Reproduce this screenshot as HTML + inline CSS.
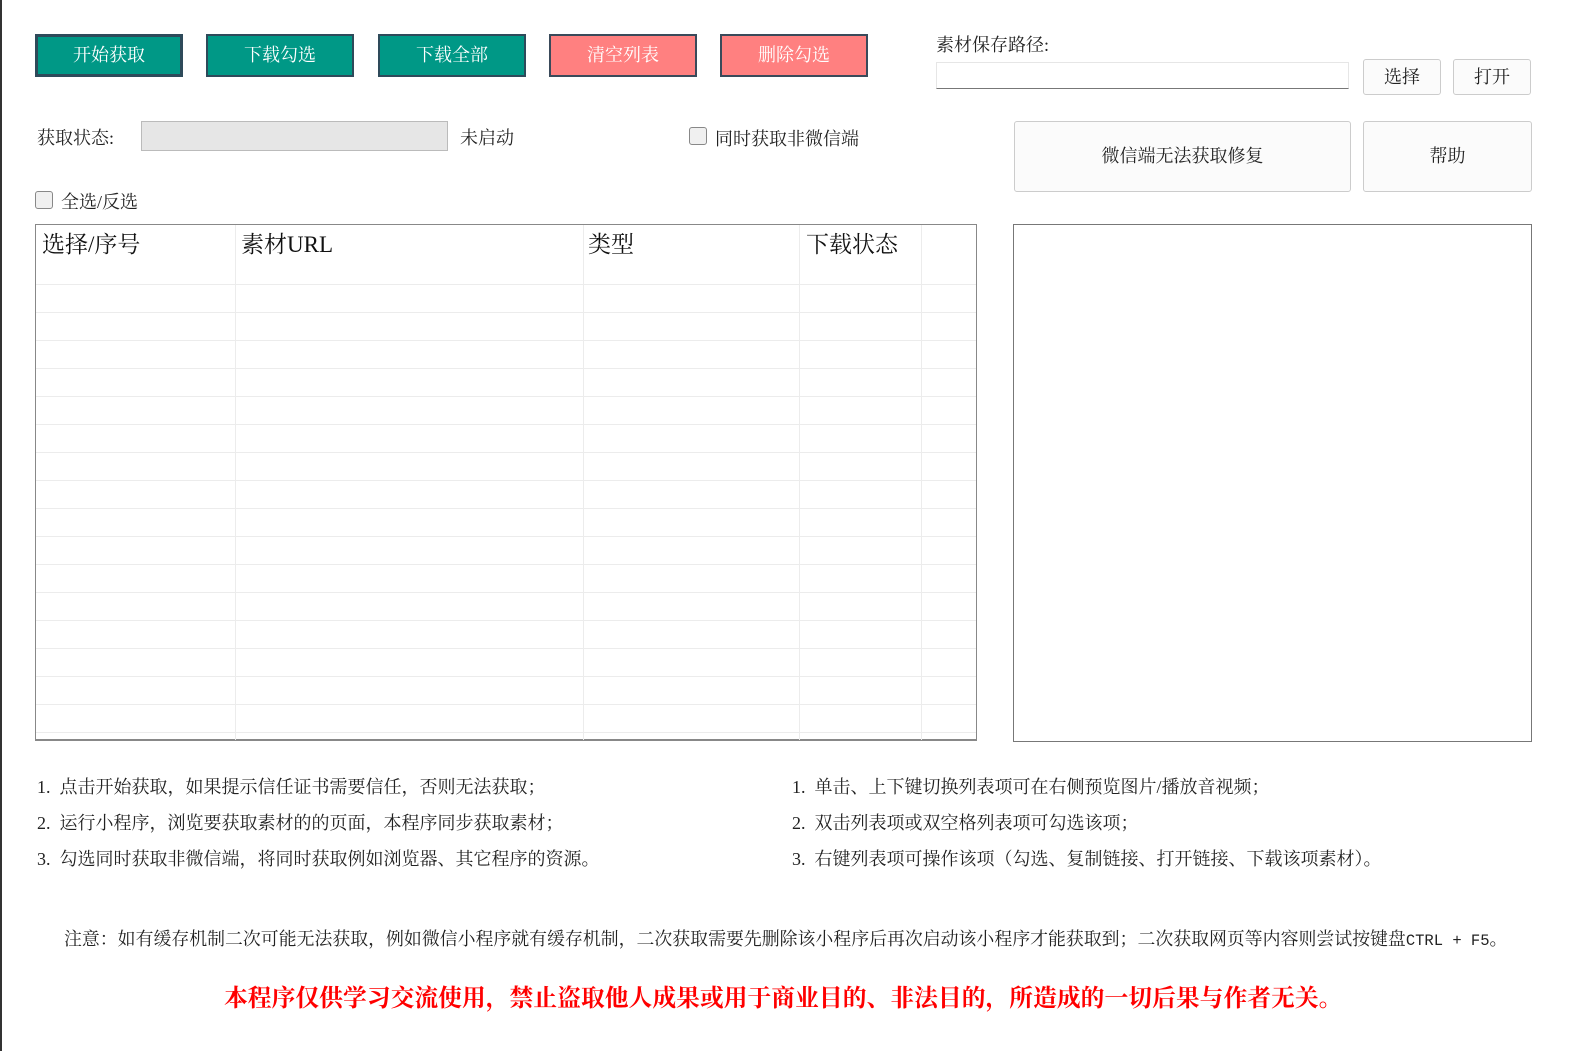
<!DOCTYPE html>
<html><head><meta charset="utf-8"><style>
body{margin:0;width:1581px;height:1051px;background:#fff;position:relative;overflow:hidden;font-family:"Liberation Serif","Noto Serif CJK SC",serif;color:#222}
.a{position:absolute}
.btn{position:absolute;top:34px;width:148px;height:43px;box-sizing:border-box;border:2px solid #2e4a5a;color:#fff;font-size:18px;text-align:center;line-height:39px}
.g{background:#009886}.r{background:#ff8080;border-color:#3a4a5a}
.wb{position:absolute;box-sizing:border-box;border:1px solid #ccc;border-radius:3px;background:#fbfbfb;text-align:center;font-size:18px;color:#222}
.cb{position:absolute;width:18px;height:18px;box-sizing:border-box;border:1px solid #888;border-radius:3px;background:#f0f0f0}
.t{font-size:18px;white-space:nowrap}
.vl{position:absolute;top:225px;width:1px;height:515px;background:#ececec}
.h{position:absolute;top:226px;font-family:"Liberation Serif","Noto Serif CJK SC",serif;font-size:23px;color:#111}
.m{font-family:"Liberation Mono",monospace}
</style></head><body>
<div class="a" style="left:0;top:0;width:2px;height:1051px;background:#333"></div>
<div class="btn g" style="left:35px;border-width:3px;line-height:37px">开始获取</div>
<div class="btn g" style="left:206px">下载勾选</div>
<div class="btn g" style="left:378px">下载全部</div>
<div class="btn r" style="left:549px">清空列表</div>
<div class="btn r" style="left:720px">删除勾选</div>

<div class="a t" style="left:936px;top:31px">素材保存路径:</div>
<div class="a" style="left:936px;top:62px;width:413px;height:27px;box-sizing:border-box;border:1px solid #e6e6e6;border-bottom:1px solid #777"></div>
<div class="wb" style="left:1363px;top:59px;width:78px;height:36px;line-height:34px">选择</div>
<div class="wb" style="left:1453px;top:59px;width:78px;height:36px;line-height:34px">打开</div>
<div class="wb" style="left:1014px;top:121px;width:337px;height:71px;line-height:69px">微信端无法获取修复</div>
<div class="wb" style="left:1363px;top:121px;width:169px;height:71px;line-height:69px">帮助</div>

<div class="a t" style="left:37px;top:124px">获取状态:</div>
<div class="a" style="left:141px;top:121px;width:307px;height:30px;box-sizing:border-box;border:1px solid #bbb;background:#e6e6e6"></div>
<div class="a t" style="left:460px;top:124px">未启动</div>
<div class="cb" style="left:689px;top:127px"></div>
<div class="a t" style="left:715px;top:125px">同时获取非微信端</div>
<div class="cb" style="left:35px;top:191px"></div>
<div class="a t" style="left:61px;top:188px">全选/反选</div>

<div class="a" style="left:35px;top:224px;width:942px;height:517px;box-sizing:border-box;border:1px solid #888;border-bottom:2px solid #888"></div>
<div class="a" style="left:36px;top:284px;width:940px;height:455px;background:repeating-linear-gradient(to bottom,#ececec 0,#ececec 1px,transparent 1px,transparent 28px)"></div>
<div class="vl" style="left:235px"></div><div class="vl" style="left:583px"></div><div class="vl" style="left:799px"></div><div class="vl" style="left:921px"></div>
<div class="h" style="left:42px">选择/序号</div>
<div class="h" style="left:241px">素材URL</div>
<div class="h" style="left:588px">类型</div>
<div class="h" style="left:806px">下载状态</div>

<div class="a" style="left:1013px;top:224px;width:519px;height:518px;box-sizing:border-box;border:1px solid #777"></div>

<div class="a t" style="left:37px;top:773px">1.&nbsp; 点击开始获取，如果提示信任证书需要信任，否则无法获取；</div>
<div class="a t" style="left:37px;top:809px">2.&nbsp; 运行小程序，浏览要获取素材的的页面，本程序同步获取素材；</div>
<div class="a t" style="left:37px;top:845px">3.&nbsp; 勾选同时获取非微信端，将同时获取例如浏览器、其它程序的资源。</div>
<div class="a t" style="left:792px;top:773px">1.&nbsp; 单击、上下键切换列表项可在右侧预览图片/播放音视频；</div>
<div class="a t" style="left:792px;top:809px">2.&nbsp; 双击列表项或双空格列表项可勾选该项；</div>
<div class="a t" style="left:792px;top:845px">3.&nbsp; 右键列表项可操作该项（勾选、复制链接、打开链接、下载该项素材）。</div>
<div class="a t" style="left:64px;top:925px;font-size:17.9px">注意：如有缓存机制二次可能无法获取，例如微信小程序就有缓存机制，二次获取需要先删除该小程序后再次启动该小程序才能获取到；二次获取网页等内容则尝试按键盘<span class="m" style="font-size:15.5px">CTRL + F5</span>。</div>
<div class="a" style="left:224px;top:979px;font-size:23.8px;font-weight:bold;color:#f00;white-space:nowrap">本程序仅供学习交流使用，禁止盗取他人成果或用于商业目的、非法目的，所造成的一切后果与作者无关。</div>
</body></html>
